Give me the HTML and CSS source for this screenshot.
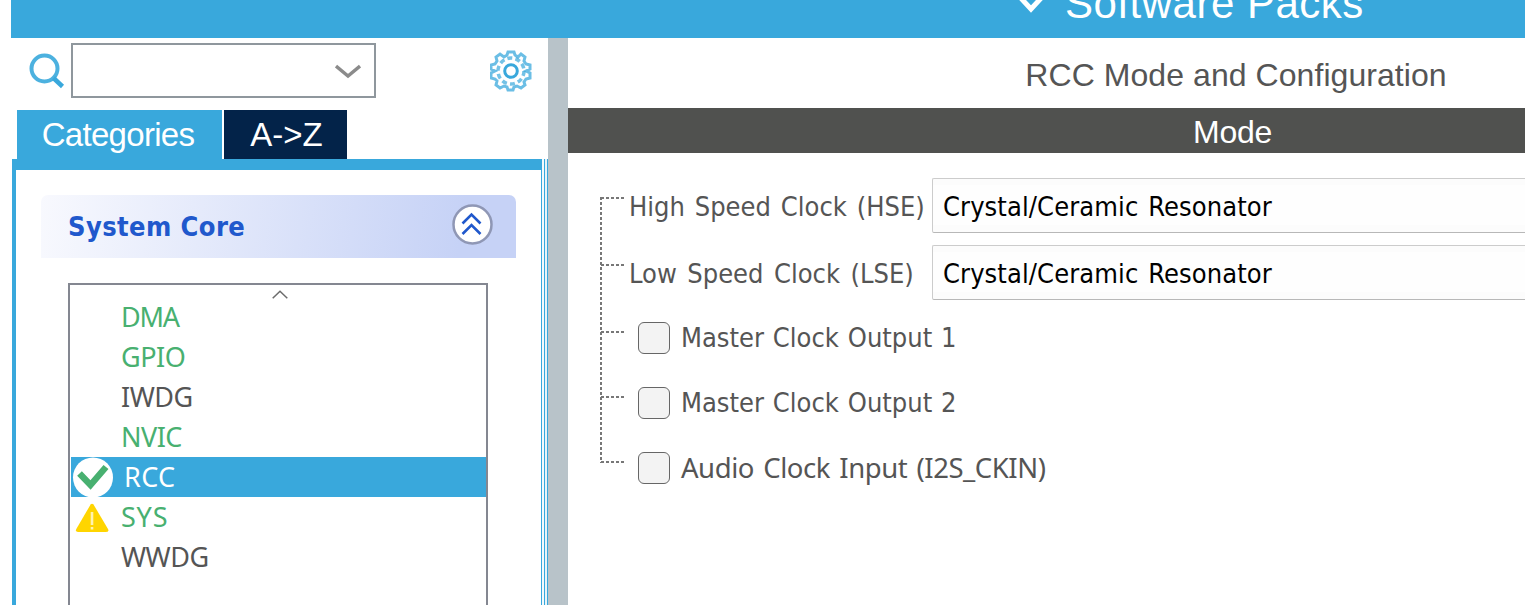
FILE: index.html
```html
<!DOCTYPE html>
<html lang="en">
<head>
<meta charset="utf-8">
<title>RCC Mode and Configuration</title>
<link rel="stylesheet" href="styles.css">
</head>
<body>
<div class="app">
  <header class="topbar">
    <svg class="top-chevron" width="34" height="30" viewBox="0 0 34 30"><path d="M4 11 17 25 30 11" fill="none" stroke="#fff" stroke-width="5"/></svg>
    <span class="top-title">Software Packs</span>
  </header>
  <div class="content">
    <aside class="sidebar">
      <div class="search">
        <svg class="search-icon" width="36" height="36" viewBox="0 0 36 36" fill="none" stroke="#39a8dc"><circle cx="15.500" cy="15.500" r="13" stroke-width="4" opacity=".9"/><path d="M24.500 25 33.500 33.500" stroke-width="4.500"/></svg>
        <div class="search-box"><svg width="26" height="16" viewBox="0 0 26 16"><path d="M1 3 13 13 25 3" fill="none" stroke="#8b8b8b" stroke-width="3.400"/></svg></div>
        <svg class="gear" width="42" height="42" viewBox="0 0 42 42" fill="none" stroke="#39a8dc"><path d="M17 5 18 2H24L25 5 28 7 31 4 35 7 34 11 36 14 40 15V19L36 21 40 23V28L36 29 34 32 35 35 31 38 27 36 24 37 23 40H18L17 37 14 36 10 38 6 35 7 31 5 29 1 28V23L5 21 1 19V15L5 14 7 11 6 7 10 4 14 7Z" stroke-width="3" opacity=".75"/><circle cx="21" cy="21" r="13" stroke-width="3.500" stroke-dasharray="5 3.168" opacity=".7"/><circle cx="21" cy="21" r="6.300" stroke-width="3"/></svg>
      </div>
      <nav class="tabs">
        <div class="tab tab-active"><span>Categories</span></div>
        <div class="tab tab-sort"><span>A-&gt;Z</span></div>
      </nav>
      <div class="panel">
        <div class="panel-body">
          <div class="group-head">
            <span class="group-title">System Core</span>
            <svg width="42" height="42" viewBox="0 0 42 42" fill="none"><circle cx="21.500" cy="21.500" r="19" fill="#fff" stroke="#8f97b5" stroke-width="2.500"/><path d="M11.500 20.500 20.500 11.500 29.500 20.500M11.500 31 20.500 22 29.500 31" stroke="#2058cc" stroke-width="2.600"/></svg>
          </div>
          <div class="list">
            <div class="list-up"><svg width="16" height="9" viewBox="0 0 16 9"><path d="M.7 8.300 8 1.200 15.300 8.300" fill="none" stroke="#6c6c6c" stroke-width="1.500"/></svg></div>
            <div class="row on"><span class="dma">DMA</span></div>
            <div class="row on"><span>GPIO</span></div>
            <div class="row"><span>IWDG</span></div>
            <div class="row on"><span>NVIC</span></div>
            <div class="row selected"><svg width="42" height="40" viewBox="0 0 42 40"><circle cx="22" cy="20.500" r="20" fill="#fff"/><path d="M8.500 16.500 19.500 28 35 10" fill="none" stroke="#48b070" stroke-width="6.500"/></svg><span class="rcc">RCC</span></div>
            <div class="row on"><svg width="42" height="40" viewBox="0 0 42 40"><path d="M19.600 7.500 5.300 32Q4 35 7 35H34.500Q38.500 35 37 32L22.500 7.500Q21 6 19.600 7.500Z" fill="#ffd500"/><path d="M21 15V28M21 30V32.500" stroke="#fff3b0" stroke-width="2.600"/></svg><span class="sys">SYS</span></div>
            <div class="row"><span>WWDG</span></div>
          </div>
        </div>
        <div class="panel-edge"></div>
      </div>
    </aside>
    <div class="splitter"></div>
    <main class="main">
      <h1 class="title"><span>RCC Mode and Configuration</span></h1>
      <h2 class="mode"><span>Mode</span></h2>
      <div class="form">
        <div class="tree"><i></i><i></i><i></i><i></i><i></i></div>
        <div class="fields">
          <div class="field"><span class="label hse">High Speed Clock (HSE)</span><div class="select"><span>Crystal/Ceramic Resonator</span></div></div>
          <div class="field"><span class="label lse">Low Speed Clock (LSE)</span><div class="select"><span>Crystal/Ceramic Resonator</span></div></div>
          <div class="checks">
            <div class="check"><b></b><span class="mco">Master Clock Output 1</span></div>
            <div class="check"><b></b><span class="mco">Master Clock Output 2</span></div>
            <div class="check"><b></b><span class="aci">Audio Clock Input (I2S_CKIN)</span></div>
          </div>
        </div>
      </div>
    </main>
  </div>
</div>
</body>
</html>
```
FILE: styles.css
```css
* { box-sizing: border-box; }
body { margin: 0; background: #fff; font-family: "DejaVu Sans Condensed", "Noto Sans", sans-serif; font-size: 27px; color: #555; }
svg { display: block; flex: none; }
span { white-space: nowrap; }
.app { width: 1525px; height: 605px; overflow: hidden; padding-left: 11px; display: flex; flex-direction: column; }
.topbar { height: 38px; flex: none; background: #39a8dc; color: #fff; display: flex; overflow: hidden; padding-left: 1003px; gap: 17px; font: 42px/48px "Liberation Sans", sans-serif; }
.top-chevron { margin-top: -16px; }
.top-title { margin-top: -20px; letter-spacing: .5px; }
.content { flex: 1; min-height: 0; display: flex; }
.sidebar { width: 537px; flex: none; display: flex; flex-direction: column; }
.search { height: 72px; flex: none; padding: 5px 0 0 18px; display: flex; align-items: flex-start; }
.search-icon { margin-top: 10px; }
.search-box { width: 305px; height: 55px; margin: 0 114px 0 6px; border: 2px solid #8f979d; display: flex; justify-content: flex-end; align-items: center; padding-right: 13px; }
.gear { margin-top: 7px; }
.tabs { height: 49px; flex: none; padding-left: 6px; display: flex; gap: 2px; font: 33px/49px "Liberation Sans", sans-serif; color: #fff; }
.tab { display: flex; justify-content: center; }
.tab-active { width: 205px; background: #39a8dc; letter-spacing: -.7px; padding-right: 3px; }
.tab-sort { width: 123px; background: #032349; padding-left: 2px; }
.panel { flex: 1; margin-left: 1px; display: flex; min-height: 0; }
.panel-body { width: 530px; border: 4px solid #39a8dc; border-top-width: 11px; border-right-width: 1px; border-bottom: 0; padding: 25px 25px 0; display: flex; flex-direction: column; gap: 25px; }
.panel-edge { width: 6px; background: linear-gradient(90deg, #f4fafd 2px, #39a8dc 2px 3px, #e7f4fa 3px 5px, #39a8dc 5px); }
.group-head { width: 475px; height: 63px; flex: none; border-radius: 7px 7px 0 0; background: linear-gradient(98deg, #f8f9fe, #c6d2f6 88%); display: flex; justify-content: space-between; padding: 8px 23px 0 27px; }
.group-title { font: bold 27px/47px "DejaVu Sans Condensed", "Noto Sans", sans-serif; letter-spacing: .42px; color: #2058cc; }
.list { flex: 1; width: 420px; margin-left: 27px; border: 2px solid #848791; border-bottom: 0; padding-left: 1px; font-family: "Noto Sans", sans-serif; letter-spacing: -.5px; }
.list-up { height: 12px; padding: 5px 0 0 201px; }
.row { height: 40px; line-height: 40px; padding-left: 50px; display: flex; }
.row.on { color: #48b070; }
.row.selected { background: #39a8dc; color: #fff; }
.row svg { margin-left: -50px; margin-right: 8px; }
.row.selected svg { margin-right: 11px; }
.dma { letter-spacing: -1.2px; }
.rcc { letter-spacing: .4px; }
.sys { letter-spacing: .8px; }
.splitter { width: 20px; flex: none; background: #b8c3c9; }
.main { flex: 1; min-width: 0; }
.title, .mode { margin: 0; font-family: "Liberation Sans", sans-serif; font-weight: 400; display: flex; justify-content: center; }
.title { height: 70px; font-size: 32px; line-height: 75px; padding-left: 379px; letter-spacing: .06px; color: #555; }
.mode { height: 45px; background: #50514f; color: #fff; font-size: 32px; line-height: 48px; padding-left: 372px; letter-spacing: -.3px; }
.form { display: flex; padding: 25px 0 0 32px; }
.tree { width: 29px; height: 266px; margin-top: 19px; display: grid; grid-template-rows: 67px 67px 65px 65px 2px; background: repeating-linear-gradient(180deg, #777 0 3px, #fff 3px 5px) 0 0/2px 100% no-repeat; }
.tree i { width: 23px; height: 2px; margin-left: 1px; background: repeating-linear-gradient(90deg, #777 0 3px, #fff 3px 5px); }
.fields { flex: 1; display: flex; flex-direction: column; gap: 12px; }
.field { height: 55px; display: flex; line-height: 57px; }
.label { width: 303px; flex: none; }
.hse { word-spacing: 2.200px; }
.lse { word-spacing: 2.800px; }
.mco { word-spacing: 1.200px; }
.aci { font-family: "Noto Sans", sans-serif; font-size: 27.500px; letter-spacing: -.45px; word-spacing: 2.600px; }
.select { flex: 1; border: 1px solid #ccc; border-right: 0; border-bottom-color: #b8b8b8; border-radius: 2px 0 0 2px; padding-left: 10px; line-height: 55px; letter-spacing: .1px; word-spacing: 2px; color: #000; background: linear-gradient(#fcfcfc 6px, #fefefe 6px 46px, #fcfcfc 46px); }
.checks { display: flex; flex-direction: column; gap: 33px; padding: 10px 0 0 9px; }
.check { height: 32px; display: flex; gap: 11px; line-height: 32px; }
.check b { width: 32px; height: 32px; border: 1px solid #666; border-radius: 6px; background: #f3f3f3; }
```
